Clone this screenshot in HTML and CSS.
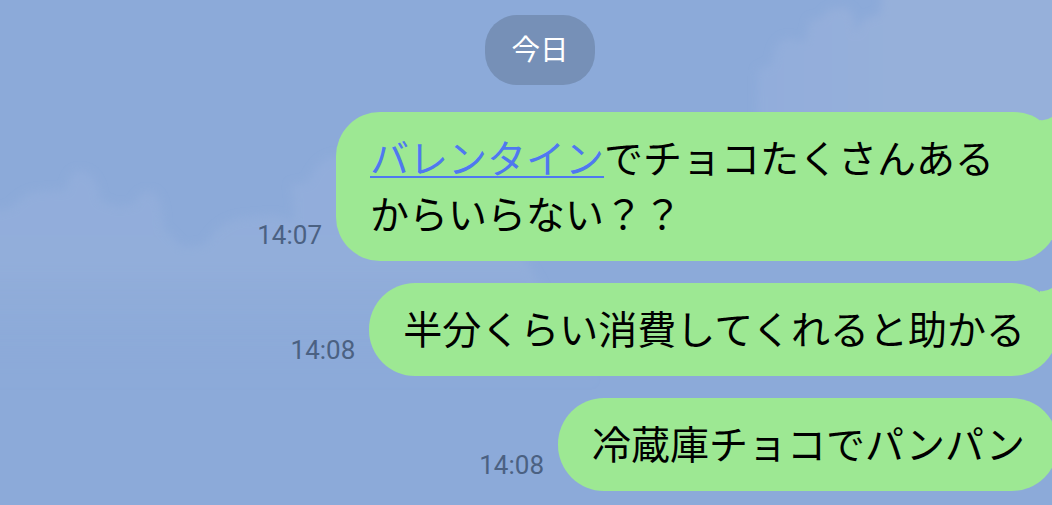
FILE: index.html
```
<!DOCTYPE html>
<html lang="ja">
<head>
    <meta charset="UTF-8">
    <meta name="viewport" content="width=device-width, initial-scale=1.0">
    <title>トーク</title>
    <link rel="stylesheet" href="styles.css">
</head>
<body>
    <!-- sky wallpaper -->
    <svg class="sky" viewBox="0 0 1052 505" aria-hidden="true">
        <defs>
            <linearGradient id="cloudLeft" x1="0" y1="170" x2="0" y2="385" gradientUnits="userSpaceOnUse">
                <stop offset="0" stop-color="#92addb"/>
                <stop offset="0.45" stop-color="#92aeda"/>
                <stop offset="1" stop-color="#8caad9" stop-opacity="0"/>
            </linearGradient>
            <linearGradient id="cloudRight" x1="757" y1="0" x2="900" y2="0" gradientUnits="userSpaceOnUse">
                <stop offset="0" stop-color="#92addb"/>
                <stop offset="1" stop-color="#96b0da"/>
            </linearGradient>
            <filter id="soft"><feGaussianBlur stdDeviation="4"/></filter>
        </defs>
        <g filter="url(#soft)">
            <path fill="url(#cloudLeft)" d="M-20 216 L12 207 Q26 190 44 191 L66 190 Q70 169 82 171 Q98 175 100 200 L118 207 L134 204 Q142 187 154 193 Q163 200 163 227 L182 247 L205 245 Q218 222 240 218 L275 215 L293 222 Q295 204 291 185 L308 182 Q318 158 336 156 L420 150 L520 250 L600 390 L-20 390 Z"/>
            <path fill="url(#cloudRight)" d="M757 200 L758 70 L772 64 Q774 40 788 38 L805 42 L810 20 L822 18 Q826 6 846 8 Q857 13 855 34 L862 20 L880 14 L884 -20 L1080 -20 L1080 200 Z"/>
        </g>
    </svg>

    <div class="chat-window">
        <div class="date">今日</div>

        <div class="messages">
            <div class="message long">
                <span class="time">14:07</span>
                <div class="bubble">
                    <svg class="tail" viewBox="0 0 30 30"><path d="M0 30 V4 Q6 5 12 1 L30 0 V8 Q24 12 24 30 Z"/></svg>
                    <div class="text"><a class="keyword">バレンタイン</a>でチョコたくさんある<br>からいらない？？</div>
                </div>
            </div>
            <div class="message">
                <span class="time">14:08</span>
                <div class="bubble">
                    <svg class="tail" viewBox="0 0 30 30"><path d="M0 30 V4 Q6 5 12 1 L30 0 V8 Q24 12 24 30 Z"/></svg>
                    <div class="text">半分くらい消費してくれると助かる</div>
                </div>
            </div>
            <div class="message short">
                <span class="time">14:08</span>
                <div class="bubble">
                    <div class="text">冷蔵庫チョコでパンパン</div>
                </div>
            </div>
        </div>
    </div>
</body>
</html>
```
FILE: styles.css
```
* {
    box-sizing: border-box;
}

body {
    margin: 0;
    height: 505px;
    overflow: hidden;
    position: relative;
    background-color: #8caad9;
    font-family: "Noto Sans CJK JP", sans-serif;
}

.sky {
    position: absolute;
    top: 0;
    left: 0;
    width: 1052px;
    height: 505px;
}

.chat-window {
    position: relative;
    width: 1058px;
    display: flex;
    flex-direction: column;
    padding-top: 15px;
}

.date {
    width: 110px;
    height: 70px;
    margin-left: 485px;
    border-radius: 32px;
    background-color: #7690b7;
    color: #fff;
    font-size: 28.5px;
    line-height: 66px;
    text-align: center;
}

.messages {
    display: flex;
    flex-direction: column;
    gap: 22px;
    margin-top: 27px;
}

.message {
    display: flex;
    justify-content: flex-end;
    align-items: flex-end;
    gap: 14px;
}

.time {
    font-family: Roboto, sans-serif;
    font-size: 26px;
    line-height: 30px;
    margin-bottom: 11px;
    color: #4b6182;
}

.bubble {
    position: relative;
    padding: 16px 33px 21px 34px;
    border-radius: 46px;
    background-color: #9de893;
}

.text {
    font-size: 39px;
    line-height: 56px;
    color: #000;
    white-space: nowrap;
}

.long .bubble {
    width: 722px;
    border-radius: 44px;
}

.short .bubble {
    width: 500px;
}

.keyword {
    color: #4f78f0;
    text-decoration: underline;
    text-decoration-thickness: 2px;
    text-underline-offset: 3px;
    text-decoration-skip-ink: none;
}

/* tail sticks out of the top right corner */
.tail {
    position: absolute;
    top: 4px;
    right: -12px;
    width: 30px;
    height: 30px;
    fill: #9de893;
}
```
